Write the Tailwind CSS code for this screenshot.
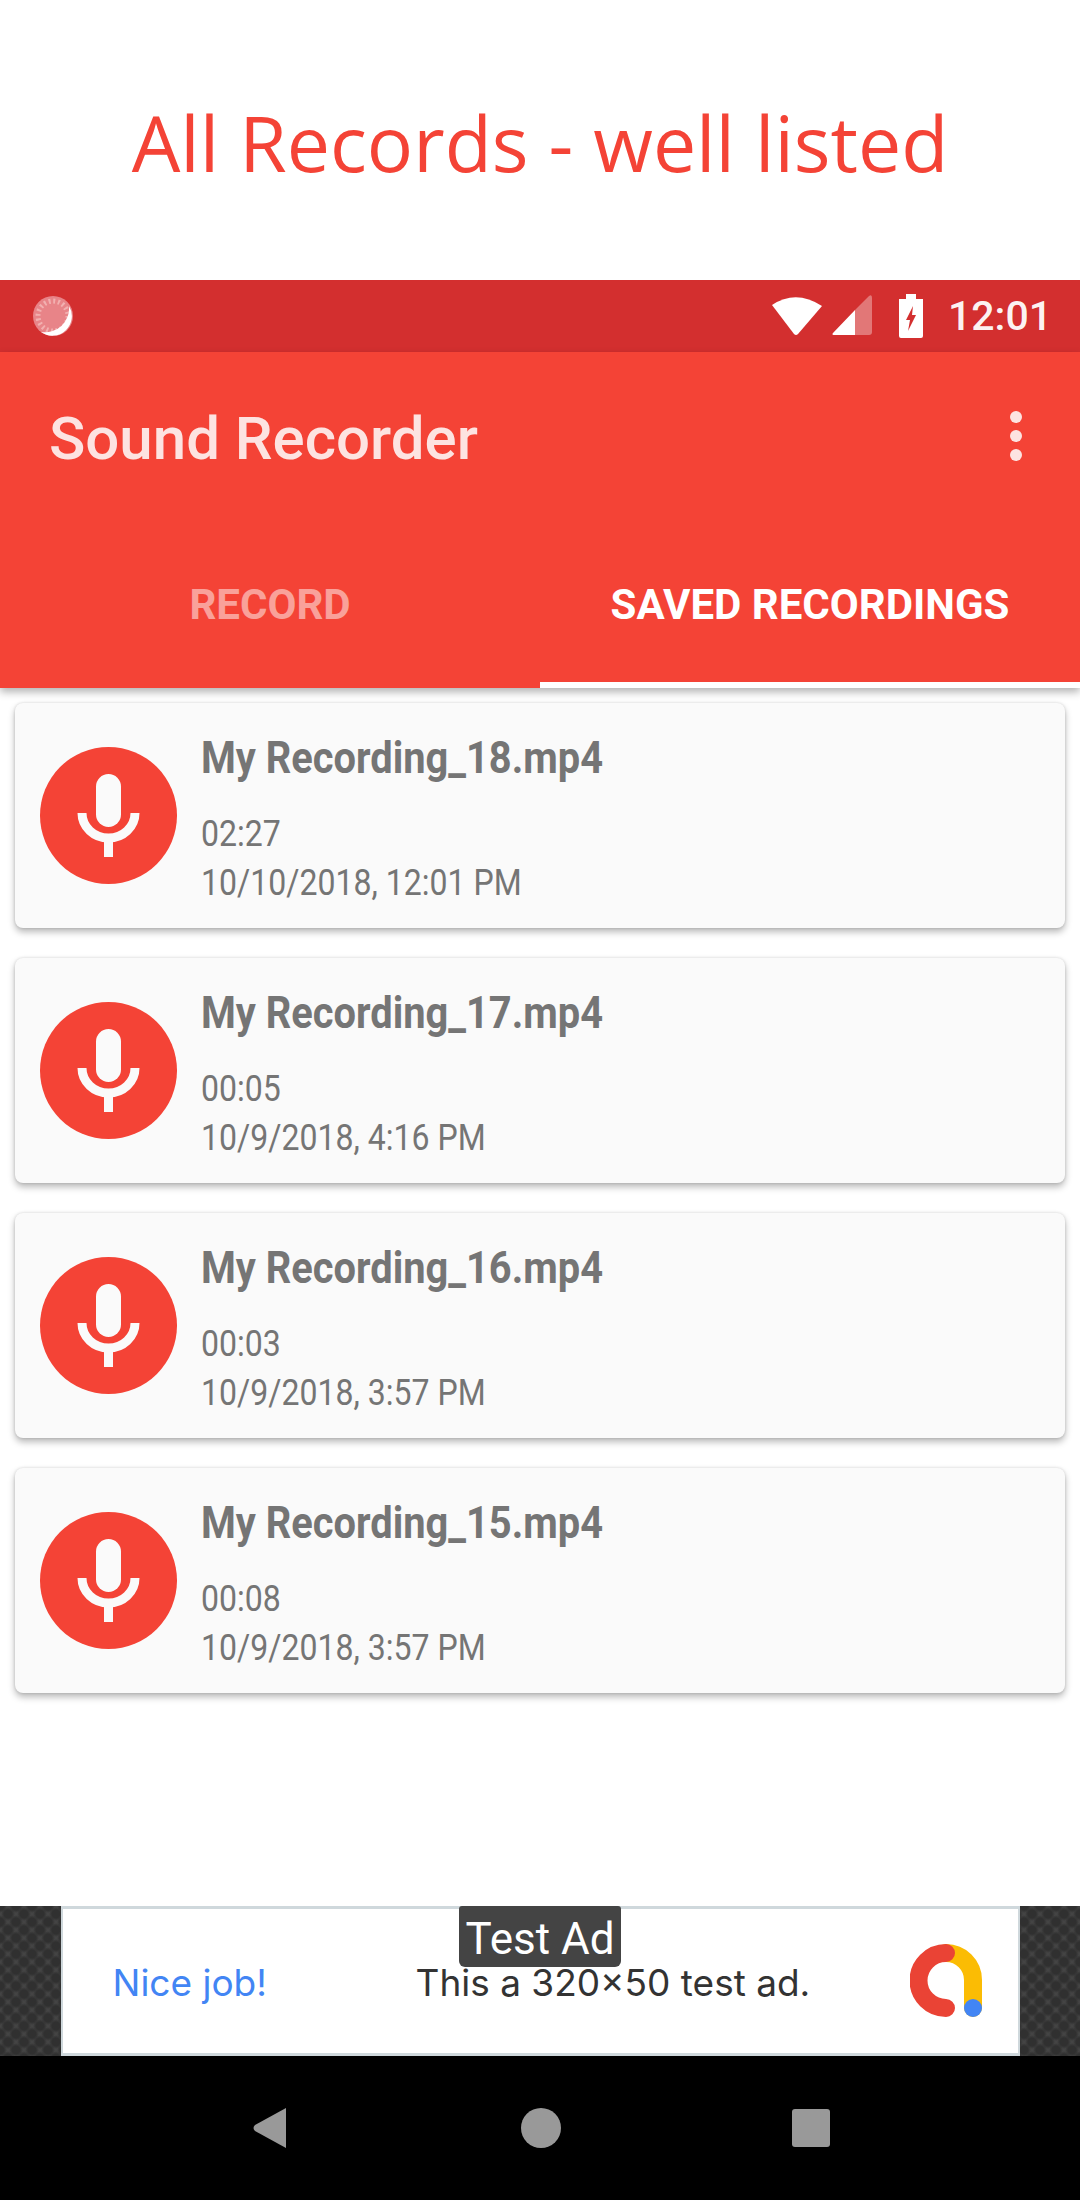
<!DOCTYPE html>
<html><head><meta charset="utf-8"><script src="https://cdn.jsdelivr.net/npm/@tailwindcss/browser@4"></script></head>
<body class="m-0 bg-white">
<div class="w-[1080px] h-[2200px] flex flex-col bg-white overflow-hidden font-['Roboto',sans-serif]">
  <div class="h-[280px] shrink-0 flex items-center justify-center bg-white">
    <span class="font-['Open_Sans',sans-serif] text-[77px] leading-[96px] text-[#F44336] whitespace-nowrap mt-[6px]">All Records - well listed</span>
  </div>
  <div class="h-[72px] shrink-0 bg-[#D32F2F] flex items-center pl-[32px] pr-[28px]">
    <svg width="42" height="42" viewBox="0 0 42 42" class="shrink-0"><circle cx="21" cy="21" r="20" fill="#E88488"/><circle cx="21" cy="21" r="15" fill="none" stroke="#F2B0B0" stroke-width="5" stroke-dasharray="2 2.7"/><circle cx="21" cy="21" r="10" fill="#E88488"/><path d="M37 11 A19.5 19.5 0 0 1 9 37 A24 24 0 0 0 37 11Z" fill="#fff"/></svg>
    <div class="flex-1"></div>
    <svg width="54" height="42" viewBox="0 0 54 42" class="shrink-0"><path d="M2 10 Q26 -6 52 11 L28 39 Q26 41 24 39Z" fill="#fff"/></svg>
    <svg width="42" height="42" viewBox="0 0 42 42" class="shrink-0 ml-[7px]"><path d="M2 38 L24 15 V40 H4 Q0 40 2 38Z" fill="#fff"/><path d="M24 15 L38 1 Q41 -1 41 3 V37 Q41 40 38 40 H24Z" fill="#fff" fill-opacity=".35"/></svg>
    <svg width="26" height="44" viewBox="0 0 26 44" class="shrink-0 ml-[25px]"><path d="M8 0 H18 V5 H25 V42 Q25 44 23 44 H3 Q1 44 1 42 V5 H8Z" fill="#fff"/><path d="M15 12 L8 26 H12 L10 37 L18 21 H14Z" fill="#D32F2F"/></svg>
    <span class="ml-[24px] text-[41px] leading-[48px] font-medium text-white/95 whitespace-nowrap">12:01</span>
  </div>
  <div class="h-[336px] shrink-0 bg-[#F44336] flex flex-col shadow-[0_4px_8px_rgba(0,0,0,0.3)] relative z-10">
    <div class="h-[176px] flex items-center pl-[49px] pr-[58px]">
      <span class="text-[60px] leading-[66px] font-medium text-white/85 whitespace-nowrap mb-[3px]">Sound Recorder</span>
      <div class="flex-1"></div>
      <div class="flex flex-col gap-[7px] -mt-[8px]">
        <div class="w-[12px] h-[12px] rounded-full bg-white/85"></div>
        <div class="w-[12px] h-[12px] rounded-full bg-white/85"></div>
        <div class="w-[12px] h-[12px] rounded-full bg-white/85"></div>
      </div>
    </div>
    <div class="h-[160px] flex">
      <div class="w-[540px] h-full flex items-center justify-center pb-[6px]">
        <span class="text-[42px] leading-[50px] font-bold text-white/50 whitespace-nowrap">RECORD</span>
      </div>
      <div class="w-[540px] h-full flex items-center justify-center border-b-[6px] border-white">
        <span class="text-[42px] leading-[50px] font-bold text-white whitespace-nowrap">SAVED RECORDINGS</span>
      </div>
    </div>
  </div>
  <div class="flex-1 flex flex-col gap-[30px] pt-[15px] px-[15px] bg-white">
    <div class="h-[225px] rounded-[8px] bg-[#FAFAFA] shadow-[0_0_3px_rgba(0,0,0,0.14),0_4px_7px_rgba(0,0,0,0.28)] flex items-start">
      <svg width="137" height="137" viewBox="0 0 137 137" class="shrink-0 ml-[25px] mt-[44px]"><circle cx="68.5" cy="68.5" r="68.5" fill="#F44336"/><rect x="56" y="27" width="25" height="53" rx="12.5" fill="#FAFAFA"/><path d="M42 66 a26.5 25 0 0 0 53 0" fill="none" stroke="#FAFAFA" stroke-width="9"/><rect x="64" y="90" width="9" height="20" fill="#FAFAFA"/></svg>
      <div class="ml-[24px] pt-[29px] flex flex-col items-start text-[#757575]">
        <span class="text-[44px] leading-[52px] font-bold whitespace-nowrap origin-left scale-x-[0.905]">My Recording_18.mp4</span>
        <span class="mt-[26px] text-[36px] leading-[49px] whitespace-nowrap origin-left scale-x-[0.89]">02:27</span>
        <span class="text-[36px] leading-[49px] whitespace-nowrap origin-left scale-x-[0.89]">10/10/2018, 12:01 PM</span>
      </div>
    </div>
    <div class="h-[225px] rounded-[8px] bg-[#FAFAFA] shadow-[0_0_3px_rgba(0,0,0,0.14),0_4px_7px_rgba(0,0,0,0.28)] flex items-start">
      <svg width="137" height="137" viewBox="0 0 137 137" class="shrink-0 ml-[25px] mt-[44px]"><circle cx="68.5" cy="68.5" r="68.5" fill="#F44336"/><rect x="56" y="27" width="25" height="53" rx="12.5" fill="#FAFAFA"/><path d="M42 66 a26.5 25 0 0 0 53 0" fill="none" stroke="#FAFAFA" stroke-width="9"/><rect x="64" y="90" width="9" height="20" fill="#FAFAFA"/></svg>
      <div class="ml-[24px] pt-[29px] flex flex-col items-start text-[#757575]">
        <span class="text-[44px] leading-[52px] font-bold whitespace-nowrap origin-left scale-x-[0.905]">My Recording_17.mp4</span>
        <span class="mt-[26px] text-[36px] leading-[49px] whitespace-nowrap origin-left scale-x-[0.89]">00:05</span>
        <span class="text-[36px] leading-[49px] whitespace-nowrap origin-left scale-x-[0.89]">10/9/2018, 4:16 PM</span>
      </div>
    </div>
    <div class="h-[225px] rounded-[8px] bg-[#FAFAFA] shadow-[0_0_3px_rgba(0,0,0,0.14),0_4px_7px_rgba(0,0,0,0.28)] flex items-start">
      <svg width="137" height="137" viewBox="0 0 137 137" class="shrink-0 ml-[25px] mt-[44px]"><circle cx="68.5" cy="68.5" r="68.5" fill="#F44336"/><rect x="56" y="27" width="25" height="53" rx="12.5" fill="#FAFAFA"/><path d="M42 66 a26.5 25 0 0 0 53 0" fill="none" stroke="#FAFAFA" stroke-width="9"/><rect x="64" y="90" width="9" height="20" fill="#FAFAFA"/></svg>
      <div class="ml-[24px] pt-[29px] flex flex-col items-start text-[#757575]">
        <span class="text-[44px] leading-[52px] font-bold whitespace-nowrap origin-left scale-x-[0.905]">My Recording_16.mp4</span>
        <span class="mt-[26px] text-[36px] leading-[49px] whitespace-nowrap origin-left scale-x-[0.89]">00:03</span>
        <span class="text-[36px] leading-[49px] whitespace-nowrap origin-left scale-x-[0.89]">10/9/2018, 3:57 PM</span>
      </div>
    </div>
    <div class="h-[225px] rounded-[8px] bg-[#FAFAFA] shadow-[0_0_3px_rgba(0,0,0,0.14),0_4px_7px_rgba(0,0,0,0.28)] flex items-start">
      <svg width="137" height="137" viewBox="0 0 137 137" class="shrink-0 ml-[25px] mt-[44px]"><circle cx="68.5" cy="68.5" r="68.5" fill="#F44336"/><rect x="56" y="27" width="25" height="53" rx="12.5" fill="#FAFAFA"/><path d="M42 66 a26.5 25 0 0 0 53 0" fill="none" stroke="#FAFAFA" stroke-width="9"/><rect x="64" y="90" width="9" height="20" fill="#FAFAFA"/></svg>
      <div class="ml-[24px] pt-[29px] flex flex-col items-start text-[#757575]">
        <span class="text-[44px] leading-[52px] font-bold whitespace-nowrap origin-left scale-x-[0.905]">My Recording_15.mp4</span>
        <span class="mt-[26px] text-[36px] leading-[49px] whitespace-nowrap origin-left scale-x-[0.89]">00:08</span>
        <span class="text-[36px] leading-[49px] whitespace-nowrap origin-left scale-x-[0.89]">10/9/2018, 3:57 PM</span>
      </div>
    </div>
  </div>
  <div class="h-[150px] shrink-0 bg-[#444444] bg-[radial-gradient(circle,#303030_4px,transparent_7px),radial-gradient(circle,#303030_4px,transparent_7px)] bg-[length:16px_16px] bg-[position:0_0,8px_8px] flex justify-center relative">
    <div class="w-[959px] h-full bg-white border-[3px] border-[#CFD8DC] border-l-2 border-r-2 flex items-center pl-[50px] pr-[34px] pt-[4px]">
      <span class="w-[160px] font-['Inter',sans-serif] text-[37px] leading-[46px] text-[#4285F4] whitespace-nowrap">Nice job!</span>
      <span class="ml-[143px] font-['Inter',sans-serif] text-[37px] leading-[46px] text-[#333] whitespace-nowrap">This a 320x50 test ad.</span>
      <div class="flex-1"></div>
      <svg width="74" height="74" viewBox="0 0 74 74" class="shrink-0 -mt-[4px]"><path d="M36 9 A27 27 0 0 1 63 36 V64" fill="none" stroke="#FBBC04" stroke-width="18" stroke-linecap="round"/><path d="M36 9 A27 27 0 0 0 36 64" fill="none" stroke="#EA4335" stroke-width="18" stroke-linecap="round"/><circle cx="63" cy="64" r="9" fill="#4285F4"/></svg>
    </div>
    <div class="absolute top-0 left-[459px] w-[162px] h-[61px] bg-[#444] rounded-b-[6px] rounded-t-[3px] flex items-end justify-center pb-[3px]">
      <span class="text-[44px] leading-[50px] text-white whitespace-nowrap">Test Ad</span>
    </div>
  </div>
  <div class="h-[144px] shrink-0 bg-black flex items-center justify-center pl-[3px]">
    <svg width="34" height="40" viewBox="0 0 34 40" class="shrink-0"><path d="M33 0 V40 L2 23 Q-1 20 2 17Z" fill="#999"/></svg>
    <div class="w-[40px] h-[40px] rounded-full bg-[#999] ml-[234px]"></div>
    <div class="w-[38px] h-[38px] rounded-[3px] bg-[#999] ml-[231px]"></div>
  </div>
</div>
</body></html>
